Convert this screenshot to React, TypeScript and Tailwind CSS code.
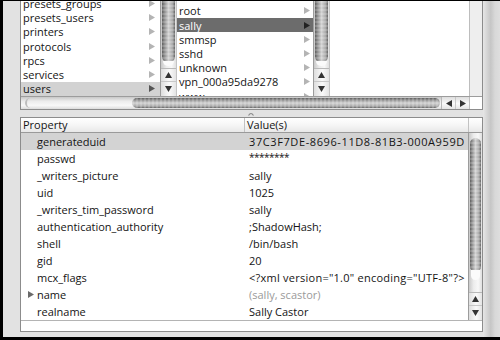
import React from 'react';

// NetInfo-style browser + property table, Aqua in grayscale.

const COL1 = ['presets_groups', 'presets_users', 'printers', 'protocols', 'rpcs', 'services', 'users'];
const COL2 = ['', 'root', 'sally', 'smmsp', 'sshd', 'unknown', 'vpn_000a95da9278', 'www'];

const PROPS: { name: string; value: string; muted?: boolean; open?: boolean; cls?: string }[] = [
  { name: 'generateduid', value: '37C3F7DE-8696-11D8-81B3-000A959D', cls: 'tracking-[0.6px]' },
  { name: 'passwd', value: '********', cls: 'text-[10px] tracking-[-0.5px] -translate-y-[2px]' },
  { name: '_writers_picture', value: 'sally' },
  { name: 'uid', value: '1025' },
  { name: '_writers_tim_password', value: 'sally' },
  { name: 'authentication_authority', value: ';ShadowHash;' },
  { name: 'shell', value: '/bin/bash' },
  { name: 'gid', value: '20' },
  { name: 'mcx_flags', value: '<?xml version="1.0" encoding="UTF-8"?>', cls: 'tracking-[0.25px]' },
  { name: 'name', value: '(sally, scastor)', muted: true, open: true },
  { name: 'realname', value: 'Sally Castor' },
];

const Tri = ({ dir = 'right', className = '' }: { dir?: 'right' | 'left' | 'up' | 'down'; className?: string }) => {
  const pts = {
    right: '0,0 6,3.5 0,7',
    left: '6,0 0,3.5 6,7',
    up: '0,6 3.5,0 7,6',
    down: '0,0 7,0 3.5,6',
  }[dir];
  const box = dir === 'up' || dir === 'down' ? '0 0 7 6' : '0 0 6 7';
  const [w, h] = dir === 'up' || dir === 'down' ? [7, 6] : [6, 7];
  return (
    <svg width={w} height={h} viewBox={box} className={className}>
      <polygon points={pts} fill="currentColor" />
    </svg>
  );
};

// vertical aqua thumb / track
const vThumb =
  'bg-[repeating-linear-gradient(to_bottom,rgba(255,255,255,0.18)_0px,rgba(255,255,255,0.18)_2px,transparent_2px,transparent_4px),linear-gradient(to_right,#5f5f5f_0%,#8c8c8c_18%,#d2d2d2_50%,#a9a9a9_82%,#646464_100%)]';
const vTrack = 'bg-[linear-gradient(to_right,#c9c9c9,#ececec_35%,#f8f8f8_70%,#e0e0e0)]';
const vBtn = 'bg-[linear-gradient(to_right,#dedede,#fafafa_55%,#e4e4e4)]';

function VScroll({ tableMode = false }: { tableMode?: boolean }) {
  return (
    <div className={`flex h-full w-full flex-col border-l border-[#9c9c9c] ${vTrack}`}>
      {tableMode ? (
        <div className="flex flex-1 flex-col px-[1px] pt-[5px]">
          <div className={`h-[134px] rounded-full ${vThumb}`} />
          <div className="mx-[1px] mt-[-2px] h-[10px] rounded-b-full bg-[#fbfbfb]" />
        </div>
      ) : (
        <div className="flex flex-1 flex-col px-[1px]">
          <div className={`h-[62px] rounded-b-full ${vThumb}`} />
          <div className="mx-[1px] mt-[-2px] h-[5px] rounded-b-full bg-[#fbfbfb]" />
        </div>
      )}
      <div className={`flex h-[13px] items-center justify-center border-t border-[#b8b8b8] text-[#333] ${vBtn}`}>
        <Tri dir="up" />
      </div>
      <div className={`flex h-[15px] items-center justify-center border-t border-[#c8c8c8] text-[#333] ${vBtn}`}>
        <Tri dir="down" />
      </div>
    </div>
  );
}

export default function App() {
  return (
    <div className="h-[340px] w-[500px] overflow-hidden bg-black pb-[3px] pl-[3px] pt-px font-['Open_Sans',sans-serif] text-[11px] text-[#141414]">
      <div className="flex h-full bg-[#e2e2e2]">
        <div className="flex flex-1 flex-col pl-[17px]">
          {/* browser */}
          <div className="flex h-[109px] flex-col border-x border-b border-[#8c8c8c] bg-white">
            <div className="flex h-[95px] overflow-hidden">
              <div className="w-[139px] overflow-hidden">
                <div className="mt-[-4.5px]">
                  {COL1.map((n) => {
                    const sel = n === 'users';
                    return (
                      <div
                        key={n}
                        className={`flex h-[14.2px] items-center justify-between pl-[2px] pr-[5px] leading-none ${
                          sel ? 'bg-[#d2d2d2]' : ''
                        }`}
                      >
                        <span>{n}</span>
                        <Tri className={sel ? 'text-[#555]' : 'text-[#b4b4b4]'} />
                      </div>
                    );
                  })}
                </div>
              </div>
              <div className="w-[16px]">
                <VScroll />
              </div>
              <div className="w-[137px] overflow-hidden border-l border-[#c4c4c4]">
                <div className="mt-[-11.4px]">
                  {COL2.map((n, i) => {
                    const sel = n === 'sally';
                    return (
                      <div
                        key={i}
                        className={`flex h-[14.2px] items-center justify-between pl-[2px] pr-[3px] leading-none ${
                          sel ? 'bg-[#6c6c6c] text-white' : ''
                        }`}
                      >
                        <span>{n}</span>
                        <Tri className={sel ? 'text-[#222]' : 'text-[#b4b4b4]'} />
                      </div>
                    );
                  })}
                </div>
              </div>
              <div className="w-[16px]">
                <VScroll />
              </div>
              <div className="w-[140px] border-l border-[#c4c4c4]" />
              <div className="w-[13px] border-l border-[#bdbdbd] bg-[#eeeeee]" />
            </div>
            {/* horizontal scroller */}
            <div className="flex h-[13px] border-t border-[#9c9c9c]">
              <div className="flex w-[420px] items-stretch bg-[linear-gradient(to_bottom,#c8c8c8,#ececec_35%,#f8f8f8_70%,#dcdcdc)] py-[1px]">
                <div className="ml-[4px] w-[6px] rounded-l-full border-l-2 border-[#bdbdbd]" />
                <div className="ml-[101px] w-[308px] rounded-full bg-[repeating-linear-gradient(to_right,rgba(255,255,255,0.18)_0px,rgba(255,255,255,0.18)_2px,transparent_2px,transparent_4px),linear-gradient(to_bottom,#5f5f5f_0%,#8c8c8c_18%,#d2d2d2_50%,#a9a9a9_82%,#646464_100%)]" />
              </div>
              <div className="flex w-[14px] items-center justify-center border-l border-[#b8b8b8] bg-[linear-gradient(to_bottom,#dedede,#fafafa_55%,#e4e4e4)] text-[#333]">
                <Tri dir="left" />
              </div>
              <div className="flex w-[14px] items-center justify-center border-l border-[#c8c8c8] bg-[linear-gradient(to_bottom,#dedede,#fafafa_55%,#e4e4e4)] text-[#333]">
                <Tri dir="right" />
              </div>
              <div className="w-[13px] border-l border-[#bdbdbd] bg-white" />
            </div>
          </div>

          {/* splitter */}
          <div className="flex h-[7px] items-center justify-center pr-[2px]">
            <svg width="6" height="4" viewBox="0 0 6 4">
              <path d="M0.5 3.5 Q3 -0.5 5.5 3.5" stroke="#8a8a8a" strokeWidth="1.2" fill="none" />
            </svg>
          </div>

          {/* property table */}
          <div className="flex h-[215px] flex-col border border-[#8c8c8c] bg-white">
            <div className="flex h-[15px] border-b border-[#9a9a9a] bg-[linear-gradient(to_bottom,#ffffff,#f6f6f6_50%,#e8e8e8)] leading-[14px]">
              <div className="w-[224px] border-r border-[#c2c2c2] pl-[2px]">Property</div>
              <div className="flex-1 pl-[2px]">Value(s)</div>
              <div className="w-[14px] border-l border-[#c2c2c2]" />
            </div>
            <div className="flex h-[187px]">
              <div className="flex-1 overflow-hidden">
                {PROPS.map((p, i) => (
                  <div key={p.name} className={`flex h-[17px] items-center leading-none ${i === 0 ? 'bg-[#d3d3d3]' : ''}`}>
                    <div className="flex w-[225px] items-center">
                      <span className="flex w-[16px] justify-end pr-[3px] text-[#6a6a6a]">
                        {p.open && <Tri />}
                      </span>
                      <span>{p.name}</span>
                    </div>
                    <span
                      className={`whitespace-nowrap pl-[3px] ${p.muted ? 'text-[#9a9a9a]' : ''} ${p.cls ?? ''}`}
                    >
                      {p.value}
                    </span>
                  </div>
                ))}
              </div>
              <div className="w-[14px]">
                <VScroll tableMode />
              </div>
            </div>
            <div className="flex-1 border-t border-[#b4b4b4]" />
          </div>
          <div className="h-[5px]" />
        </div>
        <div className="w-[17px] bg-[linear-gradient(to_right,#e6e6e6_0%,#d4d4d4_25%,#c6c6c6_45%,#d8d8d8_70%,#dedede_100%)]" />
      </div>
    </div>
  );
}
